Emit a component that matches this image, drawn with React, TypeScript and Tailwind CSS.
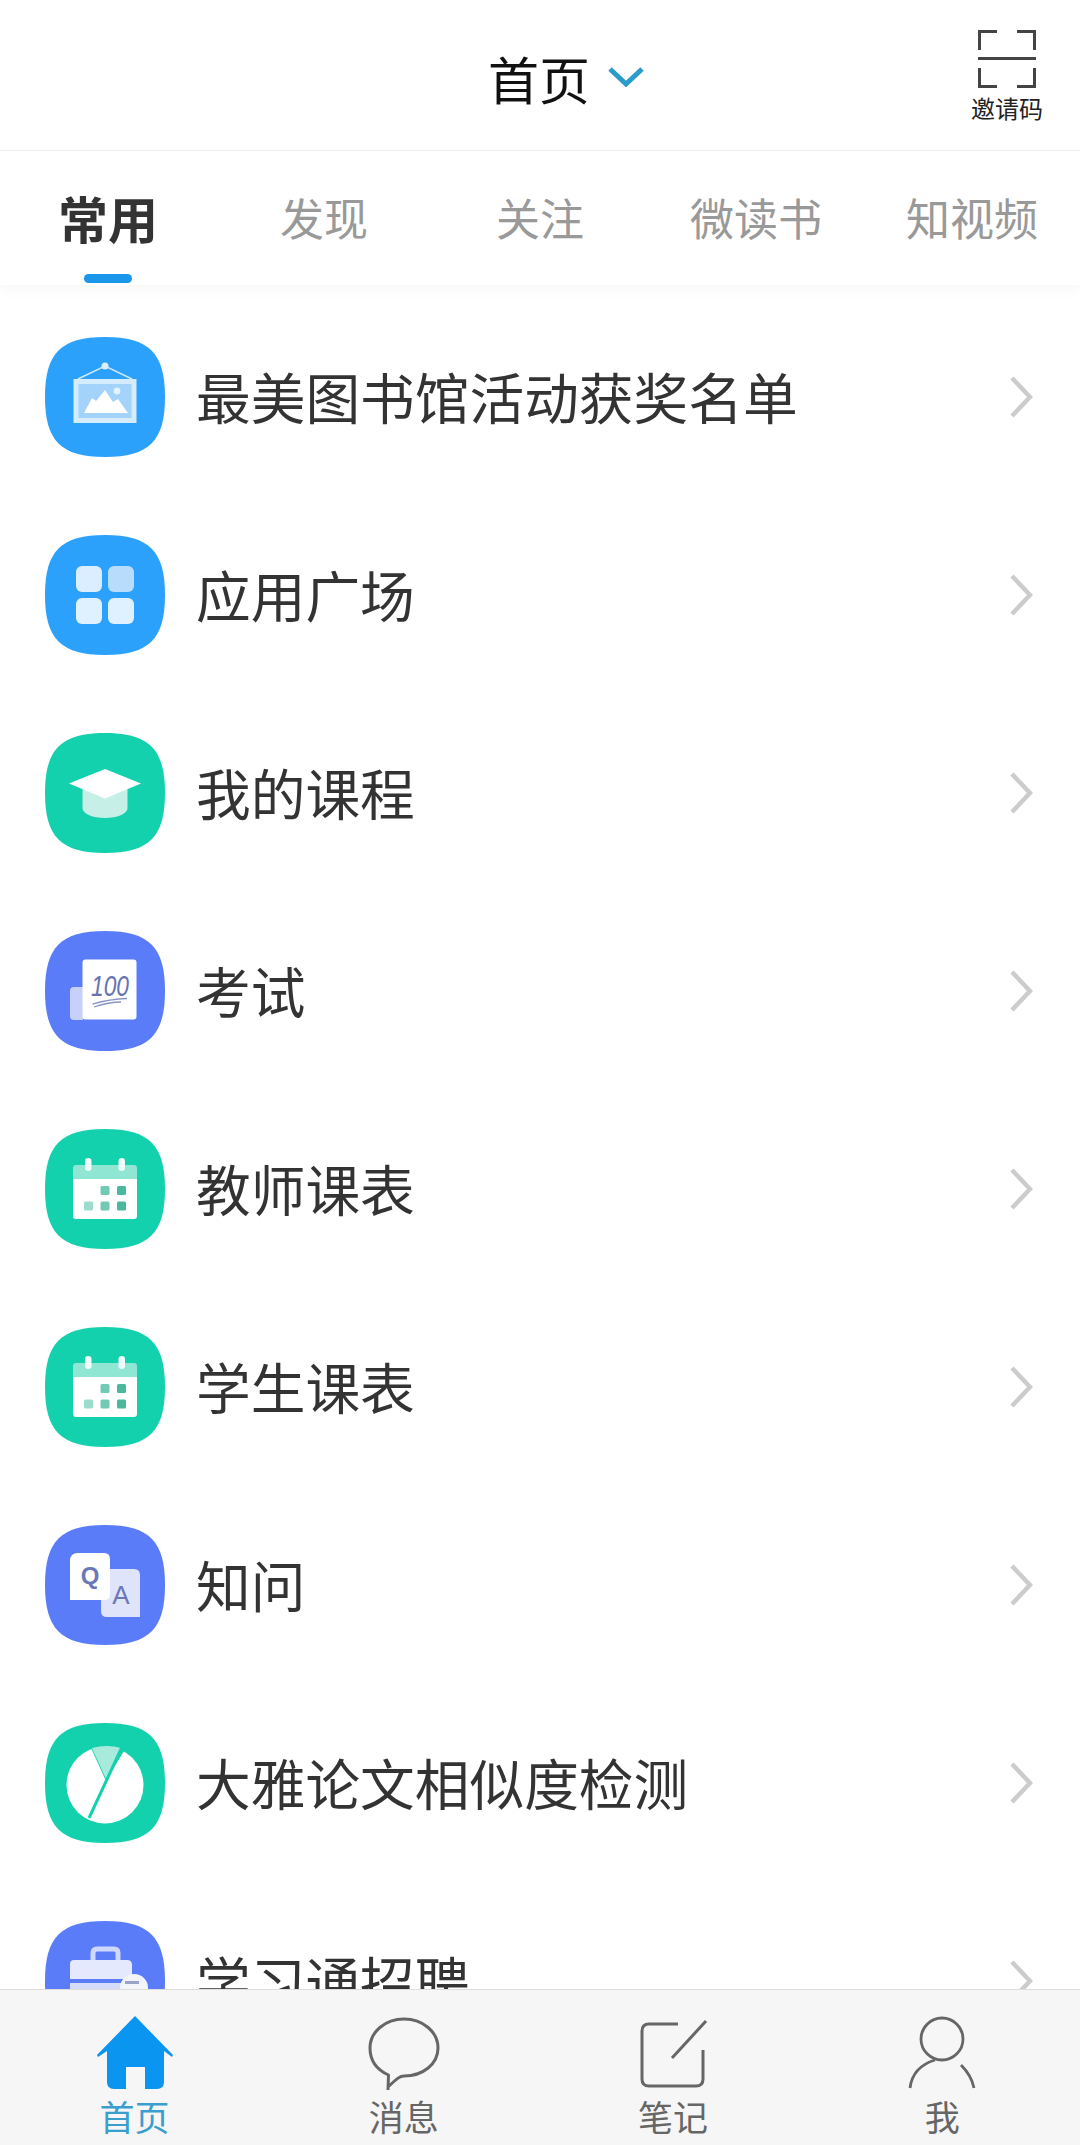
import React from "react";

const SQUIRCLE = "M60 0C104 0 120 16 120 60C120 104 104 120 60 120C16 120 0 104 0 60C0 16 16 0 60 0Z";
const BLUE = "#2ba1fb";
const GREEN = "#14d1ad";
const INDIGO = "#5a7cf8";

function Icon({ color, children }: { color: string; children?: React.ReactNode }) {
  return (
    <svg viewBox="0 0 120 120" className="w-[120px] h-[120px] shrink-0">
      <path d={SQUIRCLE} fill={color} />
      {children}
    </svg>
  );
}

const PictureIcon = () => (
  <Icon color={BLUE}>
    <path d="M33 42L60 29L87 42" fill="none" stroke="#cfe8fe" strokeWidth="1.5" />
    <circle cx="60" cy="29" r="3.5" fill="#dcefff" />
    <rect x="28.5" y="42" width="63" height="44" fill="#d5ecff" />
    <rect x="33.5" y="47" width="53" height="34" fill="#a3d2fb" />
    <path d="M39 76L47 61L51 64L60 53L68 65L73 62L83 76Z" fill="#fff" />
    <circle cx="72" cy="54" r="3.4" fill="#e2f2ff" />
  </Icon>
);

const GridIcon = () => (
  <Icon color={BLUE}>
    <rect x="31" y="31" width="26" height="26" rx="6" fill="#dbeeff" />
    <rect x="63" y="31" width="26" height="26" rx="6" fill="#b7dcfc" />
    <rect x="31" y="63" width="26" height="26" rx="6" fill="#dff1fe" />
    <rect x="63" y="63" width="26" height="26" rx="6" fill="#dff1fe" />
  </Icon>
);

const CapIcon = () => (
  <Icon color={GREEN}>
    <path d="M37.5 50H82.5V75C82.5 81 72 85 60 85C48 85 37.5 81 37.5 75Z" fill="#c6f0e7" />
    <path d="M60 36L96 50.5L60 65.5L24 50.5Z" fill="#fff" />
  </Icon>
);

const ExamIcon = () => (
  <Icon color={INDIGO}>
    <path d="M38 56H29Q25 56 25 60V85Q25 89 29 89H38Z" fill="#c6d0fb" />
    <rect x="37.5" y="28.5" width="54" height="60" rx="3" fill="#fff" />
    <text x="65" y="65" textAnchor="middle" fontSize="30" fontStyle="italic" fontWeight="500" textLength="38" lengthAdjust="spacingAndGlyphs" fill="#6673b0" style={{ fontFamily: '"Liberation Sans", sans-serif' }}>100</text>
    <path d="M47.5 73Q65 68 82 67.5" fill="none" stroke="#8a94c4" strokeWidth="1.3" />
    <path d="M49 76Q64 71 76 71" fill="none" stroke="#8a94c4" strokeWidth="1.3" />
  </Icon>
);

const CalendarIcon = () => (
  <Icon color={GREEN}>
    <path d="M31 36H89Q92 36 92 39V50H28V39Q28 36 31 36Z" fill="#8fe6d3" />
    <path d="M28 50H92V87Q92 90 89 90H31Q28 90 28 87Z" fill="#fff" />
    <rect x="40" y="29" width="6.5" height="13" rx="3.2" fill="#f1fdfa" />
    <rect x="73.5" y="29" width="6.5" height="13" rx="3.2" fill="#f1fdfa" />
    <rect x="55.5" y="57" width="9" height="9" rx="1.5" fill="#72c9b4" />
    <rect x="72" y="57" width="9" height="9" rx="1.5" fill="#49b89e" />
    <rect x="39" y="72.5" width="9" height="9" rx="1.5" fill="#9bdccc" />
    <rect x="55.5" y="72.5" width="9" height="9" rx="1.5" fill="#72c9b4" />
    <rect x="72" y="72.5" width="9" height="9" rx="1.5" fill="#49b89e" />
  </Icon>
);

const QAIcon = () => (
  <Icon color={INDIGO}>
    <path d="M56 44H89Q95 44 95 50V92H62Q56 92 56 86Z" fill="#dfe4fb" />
    <path d="M33 28H59Q65 28 65 34V69Q65 75 59 75H25V36Q25 28 33 28Z" fill="#fff" />
    <text x="45" y="59" textAnchor="middle" fontSize="24" fontWeight="700" fill="#6a78b8" style={{ fontFamily: '"Liberation Sans", sans-serif' }}>Q</text>
    <text x="76" y="79" textAnchor="middle" fontSize="26" fill="#6a78b8" style={{ fontFamily: '"Liberation Sans", sans-serif' }}>A</text>
  </Icon>
);

const PieIcon = () => (
  <Icon color={GREEN}>
    <circle cx="60" cy="62" r="38.5" fill="#fff" />
    <path d="M42 16H86L61 58Z" fill={GREEN} />
    <path d="M47 25Q62 21 76 25L61 56Z" fill="#a8ebdc" />
    <path d="M77 24L44 95" fill="none" stroke={GREEN} strokeWidth="3" />
  </Icon>
);

const CaseIcon = () => (
  <Icon color={INDIGO}>
    <path d="M48 39V32Q48 28 52 28H69Q73 28 73 32V39" fill="none" stroke="#cfd7fb" strokeWidth="5" />
    <path d="M29 39H82Q87 39 87 44V58H25V43Q25 39 29 39Z" fill="#e4e9fd" />
    <path d="M25 62H87V88Q87 92 83 92H29Q25 92 25 88Z" fill="#d4dbfb" />
    <circle cx="89" cy="67" r="14" fill="#f4f5fb" />
    <rect x="80" y="60" width="14" height="3" fill="#9aa4c8" />
  </Icon>
);

const rows: { label: string; icon: React.ReactNode }[] = [
  { label: "最美图书馆活动获奖名单", icon: <PictureIcon /> },
  { label: "应用广场", icon: <GridIcon /> },
  { label: "我的课程", icon: <CapIcon /> },
  { label: "考试", icon: <ExamIcon /> },
  { label: "教师课表", icon: <CalendarIcon /> },
  { label: "学生课表", icon: <CalendarIcon /> },
  { label: "知问", icon: <QAIcon /> },
  { label: "大雅论文相似度检测", icon: <PieIcon /> },
  { label: "学习通招聘", icon: <CaseIcon /> },
];

const tabs = ["发现", "关注", "微读书", "知视频"];

const Home = () => (
  <svg viewBox="0 0 90 80" className="w-[90px] h-[80px]">
    <path d="M45 4L83 43L82 45L74 39V70Q74 77 67 77H55V55H36V77H24Q17 77 17 70V39L8 45L7 43Z" fill="#0a95f0" />
  </svg>
);

const Message = () => (
  <svg viewBox="0 0 90 80" className="w-[90px] h-[80px]" fill="none" stroke="#666" strokeWidth="3">
    <path d="M29 78L29.5 63C16 57 11 47 11 36C11 20 26 7 45 7C64 7 79 20 79 36C79 52 64 64 45 64C41 64 38.5 66 29 75" strokeLinejoin="round" />
  </svg>
);

const Note = () => (
  <svg viewBox="0 0 90 80" className="w-[90px] h-[80px]" fill="none" stroke="#666" strokeWidth="3">
    <path d="M50 12H21Q14 12 14 19V67Q14 74 21 74H68Q75 74 75 67V38" />
    <path d="M44 46L78 9" />
  </svg>
);

const Person = () => (
  <svg viewBox="0 0 90 80" className="w-[90px] h-[80px]" fill="none" stroke="#666" strokeWidth="2.8">
    <circle cx="45" cy="27" r="21" />
    <path d="M13 76C15 60 25 52 38 48" />
    <path d="M64 53C70 59 75 66 77 76" />
  </svg>
);

const bottom = [
  { label: "首页", icon: <Home />, active: true },
  { label: "消息", icon: <Message /> },
  { label: "笔记", icon: <Note /> },
  { label: "我", icon: <Person /> },
];

export default function App() {
  return (
    <div className="w-[1080px] h-[2145px] flex flex-col overflow-hidden bg-white font-['Noto_Sans_CJK_SC','Noto_Sans',sans-serif]">
      <header className="relative h-[151px] shrink-0 flex items-center justify-center border-b border-[#eeeeee]">
        <div className="flex items-center gap-[18px] translate-y-[3px] ml-[52px]">
          <span className="text-[51px] leading-[60px] text-[#111111]">首页</span>
          <svg viewBox="0 0 36 20" className="w-[36px] h-[20px] mt-[-2px]" fill="none" stroke="#2a9cc9" strokeWidth="5">
            <path d="M2 2L18 17L34 2" />
          </svg>
        </div>
        <div className="absolute right-[33px] top-[30px] w-[80px] flex flex-col items-center">
          <svg viewBox="0 0 58 58" className="w-[58px] h-[58px]" fill="none" stroke="#444" strokeWidth="3">
            <path d="M1.5 20V1.5H19" />
            <path d="M39 1.5H56.5V20" />
            <path d="M0 28.5H58" />
            <path d="M1.5 38V56.5H19" />
            <path d="M39 56.5H56.5V38" />
          </svg>
          <span className="mt-[6px] text-[24px] leading-[28px] text-[#222222] whitespace-nowrap">邀请码</span>
        </div>
      </header>

      <nav className="relative z-10 h-[134px] shrink-0 flex bg-white shadow-[0_6px_12px_rgba(0,0,0,0.03)]">
        <div className="relative flex-1 flex justify-center pt-[36px]">
          <span className="text-[50px] leading-[60px] font-bold text-[#333333]">常用</span>
          <span className="absolute left-[84px] bottom-[2px] w-[48px] h-[9px] rounded-full bg-[#1a96ea]" />
        </div>
        {tabs.map((t) => (
          <div key={t} className="flex-1 flex justify-center pt-[36px]">
            <span className="text-[44px] leading-[60px] text-[#999999]">{t}</span>
          </div>
        ))}
      </nav>

      <main className="flex-1 overflow-hidden pt-[13px]">
        {rows.map((r) => (
          <div key={r.label} className="h-[198px] flex items-center pl-[45px] pr-[47px]">
            {r.icon}
            <span className="ml-[31px] -mt-[2px] flex-1 text-[54.7px] leading-[70px] text-[#333333] whitespace-nowrap">{r.label}</span>
            <svg viewBox="0 0 24 42" className="w-[24px] h-[42px] shrink-0" fill="none" stroke="#cccccc" strokeWidth="4.5">
              <path d="M3 2L21 21L3 40" />
            </svg>
          </div>
        ))}
      </main>

      <footer className="h-[156px] shrink-0 flex border-t border-[#dddddd] bg-[#f6f6f6] pr-[3px]">
        {bottom.map((b) => (
          <div key={b.label} className="flex-1 flex flex-col items-center pt-[22px]">
            {b.icon}
            <span className={`mt-[4px] text-[35px] leading-[40px] ${b.active ? "text-[#3a9fcf]" : "text-[#666666]"}`}>{b.label}</span>
          </div>
        ))}
      </footer>
    </div>
  );
}
